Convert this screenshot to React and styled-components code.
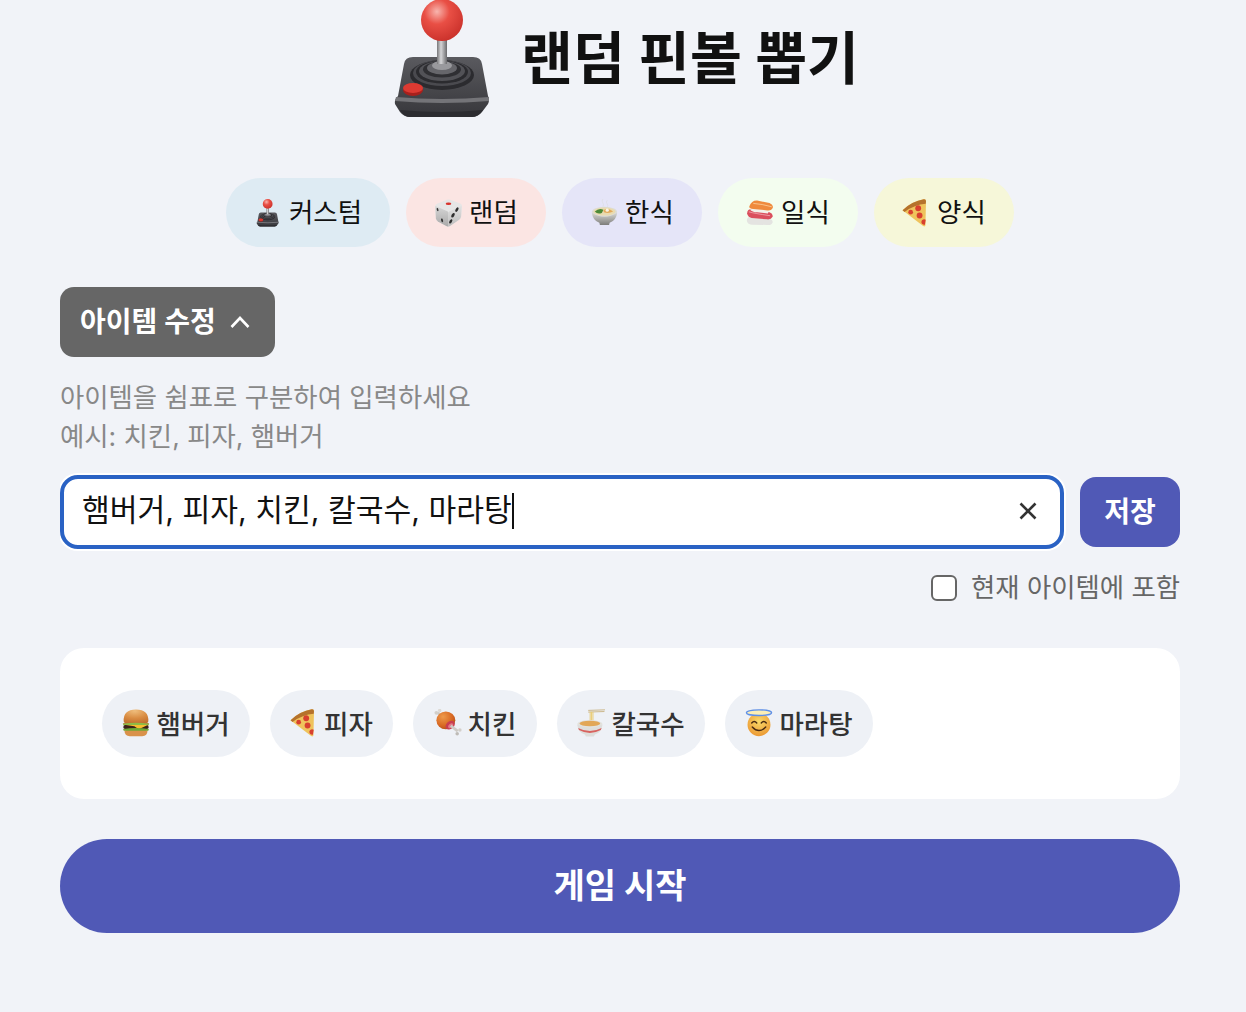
import React, { useId } from "react";
import styled, { createGlobalStyle } from "styled-components";

const FONT = `Inter, "Noto Sans CJK KR", "Noto Sans", sans-serif`;

const Global = createGlobalStyle`
  html, body { margin: 0; padding: 0; background: #f1f3f8; }
  body { font-family: ${FONT}; overflow: hidden; }
`;

const Page = styled.main`
  width: 1120px;
  height: 1012px;
  margin-left: 60px;
  display: flex;
  flex-direction: column;
  overflow: hidden;
`;
const Header = styled.header`
  height: 118px;
  display: flex;
  justify-content: center;
  align-items: flex-start;
  gap: 29px;
  margin-left: 11px;
  margin-top: -1px;
`;
const Title = styled.h1`
  margin: 29px 0 0;
  font-size: 56.4px;
  line-height: 61px;
  font-weight: 700;
  color: #111;
`;
const ModeRow = styled.nav`
  display: flex;
  justify-content: center;
  gap: 16px;
  margin-top: 61px;
`;
const ModeChip = styled.button`
  height: 69px;
  width: ${(p) => p.$w}px;
  border: 0;
  border-radius: 35px;
  background: ${(p) => p.$bg};
  color: #111;
  font: 400 26.5px/1 ${FONT};
  display: flex;
  align-items: center;
  justify-content: center;
  gap: 7px;
  padding: 0;
`;
const EmojiBox = styled.span`
  width: 28px;
  height: 30px;
  flex: none;
  display: flex;
  align-items: center;
  justify-content: center;
`;
const Toggle = styled.button`
  align-self: flex-start;
  margin-top: 40px;
  height: 70px;
  width: 215px;
  border: 0;
  border-radius: 14px;
  background: #666;
  color: #fff;
  font: 600 28px/1 ${FONT};
  display: flex;
  align-items: center;
  gap: 13px;
  padding: 0 0 0 20px;
`;
const Help = styled.p`
  margin: 21px 0 0;
  font-size: 26.4px;
  line-height: 39px;
  color: #888;
  font-weight: 400;
`;
const InputRow = styled.div`
  display: flex;
  align-items: center;
  gap: 16px;
  margin-top: 19px;
`;
const InputBox = styled.div`
  flex: 1;
  height: 74px;
  box-sizing: border-box;
  border: 4px solid #2a62c4;
  border-radius: 18px;
  box-shadow: 0 0 0 2px #fff;
  background: #fff;
  display: flex;
  align-items: center;
  padding: 0 22px 0 18px;
`;
const InputText = styled.span`
  font-size: 30.2px;
  color: #111;
  line-height: 40px;
  flex: 1;
  white-space: pre;
  margin-top: -4px;
`;
const Caret = styled.span`
  display: inline-block;
  width: 2px;
  height: 36px;
  background: #111;
  vertical-align: -8px;
`;
const ClearIcon = styled.svg`
  width: 20px;
  height: 20px;
  color: #333;
  margin-top: -3px;
`;
const SaveBtn = styled.button`
  width: 100px;
  height: 70px;
  border: 0;
  border-radius: 16px;
  background: #5059b6;
  color: #fff;
  font: 600 28px/1 ${FONT};
`;
const CheckRow = styled.label`
  display: flex;
  justify-content: flex-end;
  align-items: center;
  gap: 14px;
  margin-top: 19px;
  font-size: 26.4px;
  line-height: 39px;
  color: #666;
`;
const Check = styled.input`
  appearance: none;
  width: 26px;
  height: 26px;
  box-sizing: border-box;
  margin: 0;
  border: 2px solid #666;
  border-radius: 6px;
  background: #fff;
`;
const Card = styled.section`
  margin-top: 41px;
  height: 151px;
  box-sizing: border-box;
  background: #fff;
  border-radius: 24px;
  padding: 42px;
  display: flex;
  gap: 20px;
`;
const Tag = styled.span`
  height: 67px;
  box-sizing: border-box;
  padding-bottom: 2px;
  width: ${(p) => p.$w}px;
  border-radius: 34px;
  background: #eef1f6;
  color: #333;
  font-size: 26.5px;
  font-weight: 500;
  display: flex;
  align-items: center;
  justify-content: center;
  gap: 6px;
`;
const StartBtn = styled.button`
  margin-top: 40px;
  height: 94px;
  border: 0;
  border-radius: 47px;
  background: #5059b6;
  color: #fff;
  font: 700 34px/1 ${FONT};
`;
const PizzaSvg = styled.svg`
  margin-right: 4px;
  flex: none;
`;

const Joystick = ({ h = 120 }) => {
  const id = useId();
  return (
    <svg width={(h * 100) / 120} height={h} viewBox="22 -1 100 120" aria-hidden="true" style={{ flex: "none" }}>
      <defs>
        <radialGradient id={id + "b"} cx="0.38" cy="0.3" r="0.75">
          <stop offset="0" stopColor="#f8b5ae" />
          <stop offset="0.4" stopColor="#e94f45" />
          <stop offset="1" stopColor="#c9302a" />
        </radialGradient>
        <linearGradient id={id + "s"} x1="0" x2="1" y1="0" y2="0">
          <stop offset="0" stopColor="#77777a" />
          <stop offset="0.4" stopColor="#d5d5d7" />
          <stop offset="1" stopColor="#6a6a6d" />
        </linearGradient>
        <linearGradient id={id + "t"} x1="0" x2="0" y1="0" y2="1">
          <stop offset="0" stopColor="#5a5a5f" />
          <stop offset="1" stopColor="#37373b" />
        </linearGradient>
      </defs>
      <path d="M28 96 L34 64 Q35 57 43 57 L103 57 Q111 57 112 64 L118 96 Q120 100 118 104 L112 112 Q108 117 102 117 L40 117 Q34 117 30 112 L25 104 Q24 100 28 96Z" style={{ fill: `url(#${id}t)` }} />
      <path d="M26 97 Q72 101 119 97 L119 101 Q72 105 25 101Z" fill="#747478" />
      <path d="M30 110 Q34 117 40 117 L102 117 Q108 117 113 110 Q72 114 30 110Z" fill="#2c2c30" />
      {[
        [75, 32, 15, "#2b2b2f"],
        [73, 29, 13, "#4a4a4f"],
        [72, 26, 11.5, "#2b2b2f"],
        [71, 23, 10, "#525257"],
        [69.5, 19, 8, "#2f2f33"],
        [68, 15, 6.5, "#66666b"],
        [65.5, 10, 4.5, "#99999d"],
      ].map(([cy, rx, ry, c]) => (
        <ellipse key={cy} cx="72" cy={cy} rx={rx} ry={ry} fill={c} />
      ))}
      <rect x="67" y="38" width="10" height="26" style={{ fill: `url(#${id}s)` }} />
      <circle cx="72" cy="20" r="21" style={{ fill: `url(#${id}b)` }} />
      <ellipse cx="43" cy="90" rx="10" ry="6" fill="#a8201c" />
      <ellipse cx="43" cy="88" rx="10" ry="5" fill="#dd3a32" />
    </svg>
  );
};

const Die = () => (
  <svg width="29" height="28" viewBox="0 0 100 100" aria-hidden="true" style={{ flex: "none" }}>
    <defs>
      <linearGradient id="dieleft" x1="0" x2="0" y1="0" y2="1">
        <stop offset="0" stopColor="#d6d6d6" />
        <stop offset="1" stopColor="#a9a9a9" />
      </linearGradient>
      <linearGradient id="dieright" x1="0" x2="0" y1="0" y2="1">
        <stop offset="0" stopColor="#e2e2e2" />
        <stop offset="1" stopColor="#bdbdbd" />
      </linearGradient>
    </defs>
    <path d="M44 3 Q50 1 56 3 L92 16 Q99 19 98 27 L95 62 Q94 70 88 74 L58 95 Q50 100 42 96 L12 80 Q6 76 5 69 L2 28 Q2 20 9 17Z" fill="#e6e6e6" />
    <path d="M3 25 L46 44 Q50 46 50 50 L50 98 Q46 98 42 96 L12 80 Q6 76 5 69Z" fill="url(#dieleft)" />
    <path d="M50 50 Q50 46 54 44 L97 24 L95 62 Q94 70 88 74 L58 95 Q54 98 50 98Z" fill="url(#dieright)" />
    <ellipse cx="50" cy="17" rx="10" ry="4.5" fill="#d8322c" />
    <ellipse cx="80" cy="38" rx="4.5" ry="9" fill="#2e2e2e" transform="rotate(30 80 38)" />
    <ellipse cx="66" cy="58" rx="5" ry="9" fill="#2e2e2e" transform="rotate(30 66 58)" />
    <ellipse cx="58" cy="80" rx="4.5" ry="8.5" fill="#2e2e2e" transform="rotate(30 58 80)" />
    <ellipse cx="11" cy="38" rx="3" ry="6" fill="#333" transform="rotate(-15 11 38)" />
    <ellipse cx="27" cy="76" rx="3.5" ry="7" fill="#333" transform="rotate(-15 27 76)" />
  </svg>
);

const Bowl = () => (
  <svg width="27" height="29" viewBox="0 0 100 107" aria-hidden="true">
    <defs>
      <linearGradient id="bowlside" x1="0" x2="0" y1="0" y2="1">
        <stop offset="0" stopColor="#d8d8d4" />
        <stop offset="1" stopColor="#7d7d7a" />
      </linearGradient>
    </defs>
    <path d="M44 4 q-6 7 0 14 q5 7 0 14 M60 8 q-6 7 0 14 q4 6 0 11" fill="none" stroke="#dcdee4" strokeWidth="3" />
    <ellipse cx="50" cy="52" rx="47" ry="20" fill="#dcdcd8" />
    <ellipse cx="50" cy="50" rx="41" ry="15" fill="#e9dbb0" />
    <path d="M14 50 q14 -14 32 -7 l-6 12 q-16 6 -26 -5Z" fill="#4c8a38" />
    <path d="M46 44 q20 -9 36 6 q-16 9 -34 3Z" fill="#e3a95b" />
    <circle cx="60" cy="45" r="6" fill="#f7f3e6" />
    <path d="M3 54 Q50 84 97 54 Q93 84 69 91 L67 100 L33 100 L31 91 Q7 84 3 54Z" fill="url(#bowlside)" />
  </svg>
);

const Sushi = () => (
  <svg width="29" height="27" viewBox="0 0 100 93" aria-hidden="true">
    <path d="M3 76 Q3 62 18 60 L80 68 Q97 72 95 82 Q92 92 76 91 L20 90 Q5 88 3 76Z" fill="#e4e4e1" />
    <path d="M4 50 Q4 34 22 33 L84 46 Q98 52 95 62 Q90 72 76 71 L20 66 Q6 62 4 50Z" fill="#da4f5d" />
    <path d="M10 44 Q30 50 86 58" stroke="#ee9aa3" strokeWidth="3.5" fill="none" />
    <path d="M14 36 Q22 46 40 46 L78 50 L82 42 L34 30Z" fill="#f3f1ea" />
    <path d="M12 24 Q20 3 40 4 L84 13 Q100 20 95 31 Q90 41 76 39 L26 34 Q10 33 12 24Z" fill="#ef8a3d" />
    <path d="M26 14 Q56 16 92 26" stroke="#f9c48b" strokeWidth="3.5" fill="none" />
  </svg>
);

const Pizza = () => (
  <PizzaSvg width="24" height="28" viewBox="0 0 86 100" aria-hidden="true">
    <path d="M2 40 Q36 8 78 1 Q86 0 86 8 L84 94 Q83 100 76 97 Z" fill="#efc35c" />
    <path d="M2 40 Q36 8 78 1 Q86 0 86 8 L85 17 Q46 20 9 46Z" fill="#b5722c" />
    <circle cx="58" cy="33" r="10.5" fill="#d8402f" />
    <circle cx="31" cy="47" r="8.5" fill="#d8402f" />
    <circle cx="63" cy="59" r="10.5" fill="#d8402f" />
    <path d="M85 74 a10 10 0 1 0 -3 18Z" fill="#d8402f" />
  </PizzaSvg>
);

const Burger = () => (
  <svg width="28" height="28" viewBox="0 0 100 100" aria-hidden="true">
    <defs>
      <radialGradient id="bun" cx="0.45" cy="0.1" r="1">
        <stop offset="0" stopColor="#efbd7c" />
        <stop offset="0.55" stopColor="#d98c42" />
        <stop offset="1" stopColor="#bf6d2c" />
      </radialGradient>
    </defs>
    <path d="M6 44 Q4 2 50 2 Q96 2 94 44 Q94 50 88 50 L12 50 Q6 50 6 44Z" fill="url(#bun)" />
    <path d="M5 50 H95 V55 H5Z" fill="#d9503c" />
    <path d="M3 52 Q50 46 97 52 L95 58 Q50 62 5 58Z" fill="#8dbb45" />
    <rect x="5" y="57" width="90" height="14" rx="6" fill="#3c2118" />
    <path d="M14 57 H92 L60 72 L44 62Z" fill="#f7bd2e" />
    <path d="M4 71 Q50 65 96 71 L94 78 Q50 83 6 78Z" fill="#6fa935" />
    <path d="M9 78 H91 Q91 97 72 97 L28 97 Q9 97 9 78Z" fill="#d9924a" />
  </svg>
);

const Meat = () => (
  <svg width="28" height="27" viewBox="0 0 100 100" aria-hidden="true">
    <defs>
      <radialGradient id="meatbody" cx="0.35" cy="0.3" r="0.8">
        <stop offset="0" stopColor="#ee9a4a" />
        <stop offset="0.6" stopColor="#d96a24" />
        <stop offset="1" stopColor="#b04c1a" />
      </radialGradient>
    </defs>
    <path d="M12 14 L30 30" stroke="#cdcac5" strokeWidth="10" />
    <circle cx="7" cy="14" r="7" fill="#d2cfca" />
    <circle cx="19" cy="6" r="6.5" fill="#dcd9d4" />
    <ellipse cx="42" cy="42" rx="35" ry="33" fill="url(#meatbody)" />
    <ellipse cx="58" cy="60" rx="19" ry="14" fill="#c93e50" transform="rotate(-40 58 60)" />
    <ellipse cx="60" cy="62" rx="11" ry="7" fill="#e27a86" transform="rotate(-40 60 62)" />
    <path d="M60 62 L86 82" stroke="#cdcac5" strokeWidth="10" />
    <circle cx="94" cy="78" r="6.5" fill="#d2cfca" />
    <circle cx="84" cy="92" r="6.5" fill="#bebbb6" />
  </svg>
);

const Noodle = () => (
  <svg width="28" height="28" viewBox="0 0 100 100" aria-hidden="true">
    <path d="M40 5 L100 3 M40 11 L98 9" stroke="#c5ad78" strokeWidth="3" />
    <path d="M47 10 V48 M52 10 V48 M57 10 V48" stroke="#e9cc72" strokeWidth="3.5" />
    <ellipse cx="46" cy="54" rx="45" ry="15" fill="#e2e2de" />
    <ellipse cx="46" cy="52" rx="37" ry="10" fill="#e2a757" />
    <path d="M1 56 Q46 78 91 56 Q88 84 64 91 L60 98 L32 98 L28 91 Q4 84 1 56Z" fill="#dededb" />
    <path d="M4 68 Q46 90 88 68 L85 75 Q46 96 7 75Z" fill="#d8635f" />
  </svg>
);

const Halo = () => (
  <svg width="28" height="28" viewBox="0 0 100 100" aria-hidden="true">
    <defs>
      <radialGradient id="haloface" cx="0.5" cy="0.35" r="0.75">
        <stop offset="0" stopColor="#fad969" />
        <stop offset="1" stopColor="#e98f2b" />
      </radialGradient>
    </defs>
    <circle cx="50" cy="56" r="41" fill="url(#haloface)" />
    <ellipse cx="50" cy="13" rx="45" ry="10" fill="#fbeeb6" stroke="#5d8fe8" strokeWidth="5" />
    <path d="M24 50 q9 -11 18 0 M58 50 q9 -11 18 0" fill="none" stroke="#4a2a12" strokeWidth="5" strokeLinecap="round" />
    <path d="M26 64 Q50 90 74 64" fill="none" stroke="#4a2a12" strokeWidth="5" strokeLinecap="round" />
  </svg>
);

const modes = [
  { label: "커스텀", icon: <Joystick h={28} />, bg: "#deebf3", w: 164 },
  { label: "랜덤", icon: <Die />, bg: "#fbe5e3", w: 140 },
  { label: "한식", icon: <Bowl />, bg: "#e5e5f8", w: 140 },
  { label: "일식", icon: <Sushi />, bg: "#f3fdef", w: 140 },
  { label: "양식", icon: <Pizza />, bg: "#f6f7d9", w: 140 },
];

const tags = [
  { label: "햄버거", icon: <Burger />, w: 148 },
  { label: "피자", icon: <Pizza />, w: 123 },
  { label: "치킨", icon: <Meat />, w: 124 },
  { label: "칼국수", icon: <Noodle />, w: 148 },
  { label: "마라탕", icon: <Halo />, w: 148 },
];

export default function App() {
  return (
    <>
      <Global />
      <Page>
        <Header>
          <Joystick />
          <Title>랜덤 핀볼 뽑기</Title>
        </Header>
        <ModeRow>
          {modes.map((m) => (
            <ModeChip key={m.label} $bg={m.bg} $w={m.w}>
              <EmojiBox>{m.icon}</EmojiBox>
              {m.label}
            </ModeChip>
          ))}
        </ModeRow>
        <Toggle>
          아이템 수정
          <svg width="22" height="14" viewBox="0 0 22 14" aria-hidden="true">
            <path d="M2.5 12 L11 3 L19.5 12" fill="none" stroke="#fff" strokeWidth="2.6" />
          </svg>
        </Toggle>
        <Help>
          아이템을 쉼표로 구분하여 입력하세요
          <br />
          예시: 치킨, 피자, 햄버거
        </Help>
        <InputRow>
          <InputBox role="textbox">
            <InputText>
              햄버거, 피자, 치킨, 칼국수, 마라탕
              <Caret />
            </InputText>
            <ClearIcon viewBox="0 0 20 20" aria-hidden="true">
              <path d="M2.5 2.5 L17.5 17.5 M17.5 2.5 L2.5 17.5" stroke="currentColor" strokeWidth="2.6" />
            </ClearIcon>
          </InputBox>
          <SaveBtn>저장</SaveBtn>
        </InputRow>
        <CheckRow>
          <Check type="checkbox" />
          현재 아이템에 포함
        </CheckRow>
        <Card>
          {tags.map((t) => (
            <Tag key={t.label} $w={t.w}>
              <EmojiBox>{t.icon}</EmojiBox>
              {t.label}
            </Tag>
          ))}
        </Card>
        <StartBtn>게임 시작</StartBtn>
      </Page>
    </>
  );
}
